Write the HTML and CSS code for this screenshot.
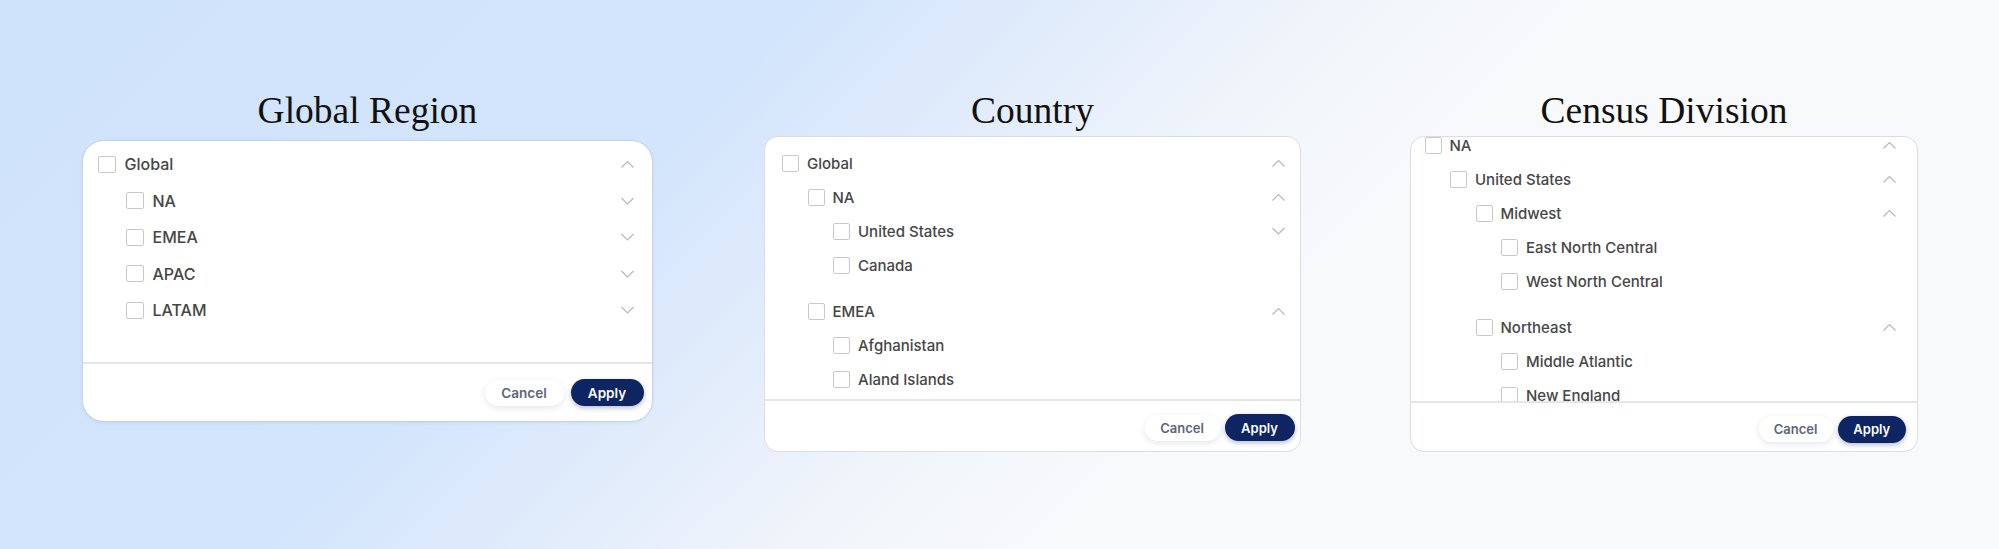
FILE: index.html
```html
<!DOCTYPE html>
<html lang="en">
<head>
    <meta charset="UTF-8">
    <meta name="viewport" content="width=device-width, initial-scale=1.0">
    <title>Location Filters</title>
    <link rel="stylesheet" href="styles.css">
</head>
<body>
    <div class="filters">
        <!-- Global Region -->
        <div class="filter-col col-region">
            <h2 class="filter-title">Global Region</h2>
            <div class="panel panel-region">
                <div class="tree">
                    <div class="node">
                        <div class="row"><span class="box"></span><span class="label">Global</span><svg class="chev" viewBox="0 0 14 8"><polyline points="1,7.5 7,1.5 13,7.5"/></svg></div>
                        <div class="children">
                            <div class="row"><span class="box"></span><span class="label">NA</span><svg class="chev" viewBox="0 0 14 8"><polyline points="1,1 7,7 13,1"/></svg></div>
                            <div class="row"><span class="box"></span><span class="label">EMEA</span><svg class="chev" viewBox="0 0 14 8"><polyline points="1,1 7,7 13,1"/></svg></div>
                            <div class="row"><span class="box"></span><span class="label">APAC</span><svg class="chev" viewBox="0 0 14 8"><polyline points="1,1 7,7 13,1"/></svg></div>
                            <div class="row"><span class="box"></span><span class="label">LATAM</span><svg class="chev" viewBox="0 0 14 8"><polyline points="1,1 7,7 13,1"/></svg></div>
                        </div>
                    </div>
                </div>
                <div class="panel-footer">
                    <button class="btn btn-cancel">Cancel</button>
                    <button class="btn btn-apply">Apply</button>
                </div>
            </div>
        </div>

        <!-- Country -->
        <div class="filter-col col-country">
            <h2 class="filter-title">Country</h2>
            <div class="panel panel-country">
                <div class="tree">
                    <div class="node">
                        <div class="row"><span class="box"></span><span class="label">Global</span><svg class="chev" viewBox="0 0 14 8"><polyline points="1,7.5 7,1.5 13,7.5"/></svg></div>
                        <div class="children">
                            <div class="row"><span class="box"></span><span class="label">NA</span><svg class="chev" viewBox="0 0 14 8"><polyline points="1,7.5 7,1.5 13,7.5"/></svg></div>
                            <div class="children leaves">
                                <div class="row"><span class="box"></span><span class="label">United States</span><svg class="chev" viewBox="0 0 14 8"><polyline points="1,1 7,7 13,1"/></svg></div>
                                <div class="row"><span class="box"></span><span class="label">Canada</span></div>
                            </div>
                            <div class="row"><span class="box"></span><span class="label">EMEA</span><svg class="chev" viewBox="0 0 14 8"><polyline points="1,7.5 7,1.5 13,7.5"/></svg></div>
                            <div class="children leaves">
                                <div class="row"><span class="box"></span><span class="label">Afghanistan</span></div>
                                <div class="row"><span class="box"></span><span class="label">Aland Islands</span></div>
                            </div>
                        </div>
                    </div>
                </div>
                <div class="panel-footer">
                    <button class="btn btn-cancel">Cancel</button>
                    <button class="btn btn-apply">Apply</button>
                </div>
            </div>
        </div>

        <!-- Census Division -->
        <div class="filter-col col-census">
            <h2 class="filter-title">Census Division</h2>
            <div class="panel panel-census">
                <div class="tree">
                    <div class="tree-scroll">
                        <div class="row"><span class="box"></span><span class="label">NA</span><svg class="chev" viewBox="0 0 14 8"><polyline points="1,7.5 7,1.5 13,7.5"/></svg></div>
                        <div class="children">
                            <div class="row"><span class="box"></span><span class="label">United States</span><svg class="chev" viewBox="0 0 14 8"><polyline points="1,7.5 7,1.5 13,7.5"/></svg></div>
                            <div class="children">
                                <div class="row"><span class="box"></span><span class="label">Midwest</span><svg class="chev" viewBox="0 0 14 8"><polyline points="1,7.5 7,1.5 13,7.5"/></svg></div>
                                <div class="children leaves">
                                    <div class="row"><span class="box"></span><span class="label">East North Central</span></div>
                                    <div class="row"><span class="box"></span><span class="label">West North Central</span></div>
                                </div>
                                <div class="row"><span class="box"></span><span class="label">Northeast</span><svg class="chev" viewBox="0 0 14 8"><polyline points="1,7.5 7,1.5 13,7.5"/></svg></div>
                                <div class="children leaves">
                                    <div class="row"><span class="box"></span><span class="label">Middle Atlantic</span></div>
                                    <div class="row"><span class="box"></span><span class="label">New England</span></div>
                                </div>
                            </div>
                        </div>
                    </div>
                </div>
                <div class="panel-footer">
                    <button class="btn btn-cancel">Cancel</button>
                    <button class="btn btn-apply">Apply</button>
                </div>
            </div>
        </div>
    </div>
</body>
</html>
```

FILE: styles.css
```css
* {
    box-sizing: border-box;
}
body {
    margin: 0;
    padding: 0;
    height: 549px;
    overflow: hidden;
    font-family: Inter, "Noto Sans", Arial, sans-serif;
    background: linear-gradient(135deg, #cfe3fb 0%, #d3e5fc 32%, #e2ecfb 43%, #f1f5fb 53%, #f8f9fb 63%, #f8f9fb 100%);
}
.filters {
    display: flex;
    align-items: flex-start;
    padding: 91px 0 0 82px;
}
.filter-col {
    display: flex;
    flex-direction: column;
    align-items: center;
}
.col-region {
    width: 571px;
}
.col-country {
    width: 537px;
    margin-left: 111px;
}
.col-census {
    width: 508px;
    margin-left: 109px;
}
.filter-title {
    margin: 0 0 5px;
    font-family: "Liberation Serif", "Times New Roman", serif;
    font-weight: 400;
    font-size: 37.5px;
    line-height: 40px;
    color: #111;
}
.panel {
    width: 100%;
    background: #fff;
    border: 1px solid #d9dde6;
    border-radius: 14px;
    overflow: hidden;
}
.panel-region {
    margin-top: 4px;
    border: 1.5px solid #c8d3ea;
    border-radius: 22px;
    box-shadow: 0 1px 3px rgba(120, 140, 180, 0.15);
}
.tree {
    overflow: hidden;
}
.panel-region .tree {
    height: 221px;
    padding: 5px 17.5px 0 14.5px;
}
.panel-country .tree {
    height: 262px;
    padding: 9px 14.5px 0 17px;
}
.panel-census .tree {
    height: 264px;
    padding: 0 20.5px 0 13.5px;
}
.tree-scroll {
    margin-top: -9px;
}
.row {
    display: flex;
    align-items: center;
    height: 34px;
}
.panel-region .row {
    height: 36.5px;
}
.box {
    width: 17px;
    height: 17px;
    border: 1.5px solid #c9c9c9;
    border-radius: 2px;
    background: #fff;
    flex-shrink: 0;
}
.panel-region .box {
    width: 18px;
}
.label {
    margin-left: 8px;
    font-size: 15px;
    font-weight: 500;
    color: #464646;
    flex: 1;
}
.panel-region .label {
    margin-left: 9px;
    font-size: 16px;
}
.chev {
    width: 15px;
    height: 8px;
    fill: none;
    stroke: #b8b8b8;
    stroke-width: 1.2;
}
.children {
    padding-left: 25.5px;
}
.panel-region .children {
    padding-left: 28px;
}
.children.leaves {
    margin-bottom: 12px;
}
.panel-footer {
    display: flex;
    justify-content: flex-end;
    align-items: center;
    gap: 5px;
    border-top: 2px solid #e4e5e9;
}
.panel-region .panel-footer {
    height: 59px;
    gap: 7px;
    padding-right: 8.5px;
}
.panel-country .panel-footer {
    height: 52px;
    padding: 3px 5.5px 0 0;
}
.panel-census .panel-footer {
    height: 50px;
    padding: 4px 11px 0 0;
}
.btn {
    height: 26px;
    border: none;
    border-radius: 13px;
    font-family: Inter, Arial, sans-serif;
    font-size: 13px;
    cursor: pointer;
}
.btn-cancel {
    width: 75px;
    background: #fff;
    color: #5c6579;
    font-weight: 600;
    box-shadow: 0 2px 6px rgba(40, 50, 80, 0.12);
}
.btn-apply {
    width: 70px;
    height: 27px;
    border-radius: 14px;
    background: #0e2563;
    color: #fff;
    font-weight: 600;
    box-shadow: 0 2px 5px rgba(14, 37, 99, 0.3);
}
.panel-region .btn {
    font-size: 13.5px;
}
.panel-region .btn-cancel {
    width: 79px;
}
.panel-region .btn-apply {
    width: 73px;
}
.panel-census .btn-cancel {
    width: 74px;
}
.panel-census .btn-apply {
    width: 68.5px;
}
```
